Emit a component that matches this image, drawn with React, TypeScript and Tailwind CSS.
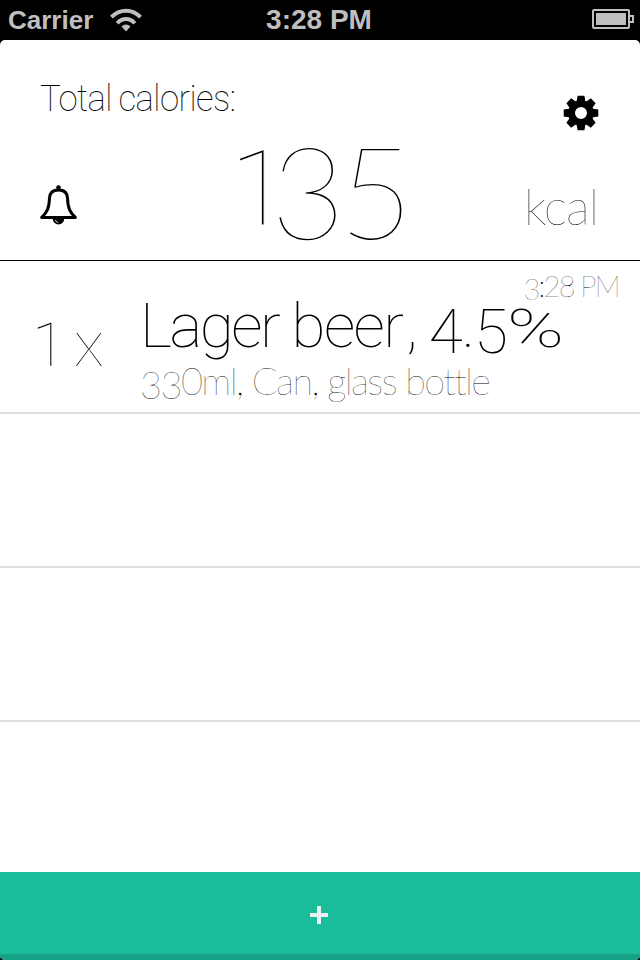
import type { ReactNode } from "react";

const emptyRows = [1, 2];

// Digits 3, 4, 5 and 9 hang below the baseline
function Low({ children }: { children: ReactNode }) {
  return <span className="align-[-0.1em] leading-none">{children}</span>;
}

function WifiIcon() {
  return (
    <svg width="32" height="24" viewBox="0 0 32 24" fill="none" stroke="#bfbfbf" strokeWidth="4">
      <path d="M1.5 9.2C9.5 0.5 22.5 0.5 30.5 9.2" />
      <path d="M7.2 15.2C12 9.6 20 9.6 24.8 15.2" />
      <path d="M16 23.5L11.5 18.6C14 15.8 18 15.8 20.5 18.6Z" fill="#bfbfbf" stroke="none" />
    </svg>
  );
}

function BatteryIcon() {
  return (
    <svg width="42" height="20" viewBox="0 0 42 20" fill="none">
      <rect x="1" y="1" width="36" height="18" rx="1" stroke="#bfbfbf" strokeWidth="2" />
      <rect x="4" y="4" width="30" height="12" fill="#bfbfbf" />
      <path d="M38 7H41V13H38" stroke="#bfbfbf" strokeWidth="2" />
    </svg>
  );
}

function GearIcon() {
  return (
    <svg width="36" height="36" viewBox="-18 -18 36 36">
      <circle r="9.4" fill="none" stroke="#000" strokeWidth="6.8" />
      {[0, 45, 90, 135, 180, 225, 270, 315].map((a) => (
        <path key={a} d="M-4.6 -10.5L-3.4 -17.3H3.4L4.6 -10.5Z" transform={`rotate(${a})`} />
      ))}
    </svg>
  );
}

function BellIcon() {
  return (
    <svg width="38" height="40" viewBox="0 0 38 40">
      <circle cx="18.5" cy="2.6" r="2.3" />
      <path
        d="M18.5 5C12.5 5 9.7 8.5 9.5 13C9.2 23 7 27.5 1.7 32.4H35.3C30 27.5 27.8 23 27.5 13C27.3 8.5 24.5 5 18.5 5Z"
        fill="none"
        stroke="#000"
        strokeWidth="3"
        strokeLinejoin="round"
      />
      <path d="M12.7 33.5A5.8 6 0 0 0 24.3 33.5Z" />
      <path d="M15.3 35.2A3.4 3.4 0 0 0 18.1 37.4" fill="none" stroke="#fff" strokeWidth="0.9" />
    </svg>
  );
}

export default function App() {
  return (
    <div className="w-[640px] h-[960px] flex flex-col bg-black text-black font-['Lato',sans-serif] whitespace-nowrap overflow-hidden">
      {/* Status bar */}
      <div className="h-10 shrink-0 grid grid-cols-[1fr_auto_1fr] items-center pl-2 pr-1.5 font-bold text-[26px] leading-10 text-[#bfbfbf] font-['Liberation_Sans',sans-serif]">
        <div className="flex items-center gap-[17px]">
          <span>Carrier</span>
          <WifiIcon />
        </div>
        <span className="text-[28px] -ml-1">3:28 PM</span>
        <div className="flex justify-end pb-0.5">
          <BatteryIcon />
        </div>
      </div>

      <div className="flex-1 flex flex-col bg-white rounded-[5px] overflow-hidden">
        {/* Summary */}
        <div className="h-[221px] shrink-0 border-b border-black pl-10 pr-10 pt-9">
          <div className="flex justify-between h-14">
            <div className="pt-[3px] text-[36px] leading-10 font-thin font-['Roboto',sans-serif] tracking-[-0.6px] [word-spacing:-1px] origin-left scale-x-[0.965]">
              Total calories:
            </div>
            <div className="pt-[19px] pr-px">
              <GearIcon />
            </div>
          </div>
          <div className="flex items-start h-[120px]">
            <div className="w-[194px] pt-[53px]">
              <BellIcon />
            </div>
            <div className="flex w-[252px] font-thin leading-[120px]">
              <span className="w-[39px] -ml-1 mr-0.5 -mt-[3px] text-[106px] font-['Roboto',sans-serif] [-webkit-text-stroke:1px_white]">
                1
              </span>
              <span className="w-[68px] -mt-0.5 text-[128px]">3</span>
              <span className="w-[66px] -mt-0.5 text-[128px]">5</span>
            </div>
            <div className="w-[76px] pt-[43px] ml-[38px] text-[50px] leading-[62px] font-thin tracking-[-1px]">kcal</div>
          </div>
        </div>

        {/* Drink */}
        <div className="h-[153px] shrink-0 flex border-b-2 border-[#dedede] pl-8">
          <div className="w-[108px] pt-[48px] leading-[62px] font-thin">
            <span className="text-[61px] font-['Roboto',sans-serif] tracking-[-3px] [-webkit-text-stroke:0.4px_white]">1</span>
            <span className="text-[68px] tracking-[-2px] [word-spacing:-6px]"> x</span>
          </div>
          <div className="flex-1">
            <div className="h-7 pr-[21px] pt-[3px] text-right text-[29px] leading-[44px] font-thin tracking-[-1.7px]">
              <Low>3</Low>:28 PM
            </div>
            <div className="h-[66px] pt-[3px] text-[62px] leading-[68px] font-[150] font-['Roboto',sans-serif] tracking-[-2.5px] [word-spacing:1px]">
              Lager <span className="tracking-[-1.6px]">beer</span>
              <span className="ml-1">,</span>{" "}
              <span className="tracking-[-1px]">
                <Low>4</Low>.<Low>5</Low>
              </span>
              <span className="inline-block origin-left scale-x-[1.42] text-[54px] leading-none">%</span>
            </div>
            <div className="text-[38px] leading-[50px] font-thin tracking-[-1.6px]">
              <Low>33</Low>0ml, Can, glass bottle
            </div>
          </div>
        </div>
        {emptyRows.map((row) => (
          <div key={row} className="h-[154px] shrink-0 border-b-2 border-[#dedede]" />
        ))}
        <div className="flex-1" />

        {/* Add button */}
        <button className="h-[88px] shrink-0 flex justify-center bg-[#1bbc9b] border-b-6 border-[#16a085] pt-[34px]">
          <svg width="18" height="18" viewBox="0 0 18 18" className="mr-0.5">
            <path d="M7 0H11V7H18V11H11V18H7V11H0V7H7Z" fill="#ecf0f1" />
          </svg>
        </button>
      </div>
    </div>
  );
}
